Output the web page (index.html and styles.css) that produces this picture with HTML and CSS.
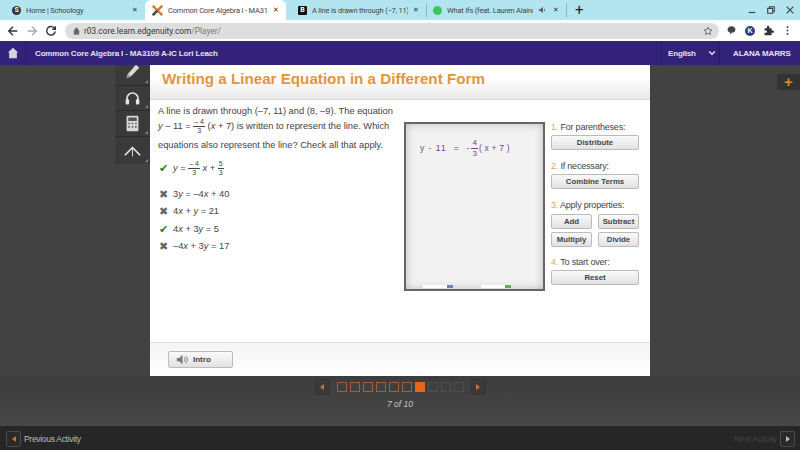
FILE: index.html
```html
<!DOCTYPE html>
<html lang="en">
<head>
  <meta charset="UTF-8" />
  <title>Common Core Algebra I - MA3109</title>
  <link rel="stylesheet" href="styles.css">
</head>
<body>
  <div class="tabs">
    <div class="tab"><span class="fav fav-s">S</span><span class="tab-name">Home | Schoology</span><span class="tab-x">✕</span></div>
    <div class="tab active">
      <svg class="fav-svg" viewBox="0 0 14 14"><path d="M1 1l12 12M13 1L1 13" stroke="#d9772b" stroke-width="3"/><path d="M1 13L7 7" stroke="#33506b" stroke-width="3"/></svg>
      <span class="tab-name">Common Core Algebra I - MA310</span><span class="tab-x">✕</span>
    </div>
    <div class="tab"><span class="fav fav-b">B</span><span class="tab-name">A line is drawn through (−7, 11)</span><span class="tab-x">✕</span></div>
    <div class="tab last"><span class="fav fav-g"></span><span class="tab-name">What Ifs (feat. Lauren Alaina</span>
      <svg class="speaker-small" viewBox="0 0 10 10"><path d="M1 4h2l3-3v8L3 6H1z" fill="#555"/><path d="M8 3.500v3" stroke="#555"/></svg>
      <span class="tab-x">✕</span></div>
    <div class="new-tab">+</div>
    <div class="win-btns">
      <svg viewBox="0 0 12 12"><path d="M2 9h8" stroke="#444" stroke-width="1.4"/></svg>
      <svg viewBox="0 0 12 12"><path d="M2 4h6v6H2zM4 4V2h6v6H8" fill="none" stroke="#444" stroke-width="1.3"/></svg>
      <svg viewBox="0 0 12 12"><path d="M2 2l8 8M10 2l-8 8" stroke="#444" stroke-width="1.4"/></svg>
    </div>
  </div>

  <div class="addr">
    <svg class="nav-ico" viewBox="0 0 14 14"><path d="M12 7H2.500M7 2L2 7l5 5" fill="none" stroke="#333" stroke-width="1.6"/></svg>
    <svg class="nav-ico" viewBox="0 0 14 14"><path d="M2 7h9.500M7 2l5 5-5 5" fill="none" stroke="#aaa" stroke-width="1.6"/></svg>
    <svg class="nav-ico" viewBox="0 0 14 14"><path d="M11.500 4.500A5 5 0 1 0 12 7.500M12 1.500v3.500H8.500" fill="none" stroke="#333" stroke-width="1.6"/></svg>
    <div class="url">
      <svg class="lock" viewBox="0 0 10 12"><path d="M1.500 5h7v6h-7zM3 5V3.500a2 2 0 0 1 4 0V5" fill="#666" stroke="#666"/></svg>
      <span class="url-host">r03.core.learn.edgenuity.com</span><span class="url-path">/Player/</span>
      <svg class="star" viewBox="0 0 14 14"><path d="M7 1.500l1.700 3.600 3.800.5-2.800 2.600.7 3.800L7 10.100 3.600 12l.7-3.800L1.500 5.600l3.800-.5z" fill="none" stroke="#555" stroke-width="1.1"/></svg>
    </div>
    <div class="ext">
      <svg viewBox="0 0 14 14"><path d="M7 1.500c3 0 5 1.800 5 4.200S10 10 7 10l-1 2.500-1-3C3 9 2 7.500 2 5.700 2 3.300 4 1.500 7 1.500z" fill="#444"/></svg>
      <span class="ext-k">K</span>
      <svg viewBox="0 0 14 14"><path d="M2 4h3V2.500a1.500 1.500 0 0 1 3 0V4h3v3h1.500a1.500 1.500 0 0 1 0 3H11v3H2v-3h1.500a1.500 1.500 0 0 0 0-3H2z" fill="#333"/></svg>
      <svg viewBox="0 0 14 14"><circle cx="7" cy="2.500" r="1.200" fill="#444"/><circle cx="7" cy="7" r="1.200" fill="#444"/><circle cx="7" cy="11.500" r="1.200" fill="#444"/></svg>
    </div>
  </div>

  <header class="site-head">
    <div class="home-btn"><svg viewBox="0 0 14 14"><path d="M7 1L1 6.500h1.500V13h9V6.500H13z" fill="#d5d2e0"/></svg></div>
    <div class="course">Common Core Algebra I - MA3109 A-IC Lori Leach</div>
    <div class="lang">English <svg viewBox="0 0 10 10"><path d="M1.500 3l3.500 3.500L8.500 3" fill="none" stroke="#e3e0ee" stroke-width="1.800"/></svg></div>
    <div class="user">ALANA MARRS</div>
  </header>

  <main class="stage">
    <aside class="tools">
      <div class="tool tool-pencil"><svg viewBox="0 0 20 20"><path d="M3 18l1.500-5L14 2l4 3.500L8 16z" fill="#d8d8d8"/><path d="M3 18l1.500-5L8 16z" fill="#999"/></svg></div>
      <div class="tool"><svg viewBox="0 0 20 20"><path d="M3.500 13V10a6.500 6.500 0 0 1 13 0v3" fill="none" stroke="#e4e4e4" stroke-width="2"/><rect x="2" y="11" width="4" height="6" rx="1" fill="#e4e4e4"/><rect x="14" y="11" width="4" height="6" rx="1" fill="#e4e4e4"/></svg></div>
      <div class="tool"><svg viewBox="0 0 20 20"><rect x="3" y="1" width="14" height="18" rx="1.500" fill="#d8d8d8"/><rect x="5" y="3" width="10" height="4" fill="#555"/><path d="M5 9h2v2H5zM9 9h2v2H9zM13 9h2v2h-2zM5 13h2v2H5zM9 13h2v2H9zM13 13h2v2h-2z" fill="#666"/></svg></div>
      <div class="tool"><svg viewBox="0 0 20 20"><path d="M1 15.500L10 6.500l9 9" fill="none" stroke="#eee" stroke-width="1.800"/><path d="M10 7v10" stroke="#eee" stroke-width="1"/></svg></div>
    </aside>

    <section class="card">
      <h1 class="title-bar">Writing a Linear Equation in a Different Form</h1>
      <div class="content">
        <div class="question">
          <p class="prompt">A line is drawn through (–7, 11) and (8, –9). The equation
            <span class="line-eq"><i>y</i> – 11 = <span class="frac"><span>– 4</span><span>3</span></span> (<i>x</i> + 7) is written to represent the line. Which</span>
            equations also represent the line? Check all that apply.</p>
          <ul class="answers">
            <li class="first"><span class="mark ok">✔</span><span><i>y</i> = <span class="frac"><span>– 4</span><span>3</span></span> <i>x</i> + <span class="frac"><span>5</span><span>3</span></span></span></li>
            <li><span class="mark no">✖</span><span>3<i>y</i> = –4<i>x</i> + 40</span></li>
            <li><span class="mark no">✖</span><span>4<i>x</i> + <i>y</i> = 21</span></li>
            <li><span class="mark ok">✔</span><span>4<i>x</i> + 3<i>y</i> = 5</span></li>
            <li><span class="mark no">✖</span><span>–4<i>x</i> + 3<i>y</i> = 17</span></li>
          </ul>
        </div>

        <div class="board">
          <div class="board-eq">
            <span>y - 11</span><span class="eq-sign">=</span>
            <span class="board-neg">-</span><span class="frac board-frac"><span>4</span><span>3</span></span><span class="board-paren">( x + 7 )</span>
          </div>
          <div class="tray">
            <span class="marker blue"></span><span class="marker green"></span>
          </div>
        </div>

        <div class="steps">
          <div class="step"><div class="step-label"><b>1.</b> For parentheses:</div><button class="btn">Distribute</button></div>
          <div class="step"><div class="step-label"><b>2.</b> If necessary:</div><button class="btn">Combine Terms</button></div>
          <div class="step step-props"><div class="step-label"><b>3.</b> Apply properties:</div>
            <div class="btn-grid"><button class="btn">Add</button><button class="btn">Subtract</button><button class="btn">Multiply</button><button class="btn">Divide</button></div>
          </div>
          <div class="step"><div class="step-label"><b>4.</b> To start over:</div><button class="btn">Reset</button></div>
        </div>
      </div>
      <div class="card-foot">
        <button class="intro">
          <svg viewBox="0 0 16 14"><path d="M1 5h3l4-4v12L4 9H1z" fill="#777"/><path d="M10 4.500a3.500 3.500 0 0 1 0 5M12 2.500a6.500 6.500 0 0 1 0 9" fill="none" stroke="#777" stroke-width="1.200"/></svg>
          Intro
        </button>
      </div>
    </section>

    <div class="plus-tab">+</div>
  </main>

  <div class="pager-wrap">
    <div class="pager">
      <span class="arrow"><i class="tri left"></i></span>
      <div class="squares">
        <span class="sq"></span><span class="sq"></span><span class="sq"></span><span class="sq"></span><span class="sq"></span><span class="sq"></span>
        <span class="sq on"></span><span class="sq off"></span><span class="sq off"></span><span class="sq off"></span>
      </div>
      <span class="arrow"><i class="tri right"></i></span>
    </div>
    <div class="count">7 of 10</div>
  </div>

  <footer class="activity">
    <div class="prev"><span class="arrow dark"><i class="tri left"></i></span> Previous Activity</div>
    <div class="next">Next Activity <span class="arrow dark"><i class="tri right grey"></i></span></div>
  </footer>
</body>
</html>
```

FILE: styles.css
```css
html, body { margin:0; height:450px; overflow:hidden; }
body { width:800px; font-family:"Liberation Sans",sans-serif; background:#424242; display:flex; flex-direction:column; }

/* browser chrome */
.tabs { height:20px; background:#b3e5f0; display:flex; align-items:center; font-family:Roboto,sans-serif; font-size:7.500px; letter-spacing:-.2px; color:#444; flex:none; }
.tab { width:140px; height:20px; box-sizing:border-box; display:flex; align-items:center; padding:0 7px 0 12px; gap:5px; }
.tab:first-child { width:145px; }
.tab.active { background:#fff; border-radius:6px 6px 0 0; width:141px; padding-left:6px; }
.tab.last { width:140px; padding-left:6px; border-left:1px solid #8fb8c2; height:14px; }
.tab-name { flex:1; white-space:nowrap; overflow:hidden; }
.tab-x { font-size:7px; color:#333; }
.fav { width:9px; height:9px; border-radius:50%; flex:none; font-size:7px; line-height:9px; text-align:center; color:#fff; font-weight:bold; }
.fav-s { background:#333; }
.fav-b { background:#111; border-radius:1px; }
.fav-g { background:#3cc860; }
.fav-svg { width:11px; height:11px; flex:none; margin-left:1px; }
.speaker-small { width:8px; height:8px; flex:none; margin-right:2px; }
.new-tab { padding-left:8px; border-left:1px solid #8fb8c2; font-size:15px; line-height:14px; color:#222; }
.win-btns { margin-left:auto; display:flex; gap:9px; padding-right:5px; }
.win-btns svg { width:10px; height:10px; }

.addr { height:21px; background:#fff; display:flex; align-items:center; padding-left:7px; flex:none; }
.nav-ico { width:12px; height:12px; margin-right:7px; }
.url { width:654px; margin-left:1px; height:16px; background:#dedede; border-radius:8px; display:flex; align-items:center; font-family:Roboto,sans-serif; font-size:8.300px; box-sizing:border-box; padding:0 6px 0 8px; flex:none; }
.lock { width:7px; height:8px; margin-right:4px; }
.url-host { color:#333; }
.url-path { color:#777; }
.star { width:10px; height:10px; margin-left:auto; }
.ext { display:flex; align-items:center; gap:8px; margin-left:7px; }
.ext svg { width:11px; height:11px; }
.ext-k { width:10px; height:10px; border-radius:50%; background:#2b3e8c; color:#fff; font-size:7px; line-height:10px; text-align:center; font-weight:bold; }

/* site header */
.site-head { height:24px; background:#33227a; color:#e4e1ef; display:flex; align-items:center; font-size:8px; letter-spacing:-.15px; font-weight:bold; flex:none; }
.home-btn { width:25px; height:24px; display:flex; align-items:center; justify-content:center; border-right:1px solid #2a1b69; }
.home-btn svg { width:12px; height:12px; }
.course { margin-left:9px; flex:1; }
.lang { width:59px; height:24px; display:flex; align-items:center; gap:12px; border-left:1px solid #2a1b69; border-right:1px solid #2a1b69; padding-left:6px; box-sizing:border-box; }
.lang svg { width:8px; height:8px; }
.user { width:80px; padding-left:13px; box-sizing:border-box; }

/* main stage */
.stage { height:311px; background:#424242; display:flex; flex:none; position:relative; }
.tools { width:35px; margin-left:115px; background:#3a3a3a; display:flex; flex-direction:column; align-self:flex-start; flex:none; }
.tool { height:26px; display:flex; align-items:center; justify-content:center; border-bottom:1px solid #2a2a2a; box-sizing:border-box; position:relative; }
.tool::after { content:""; position:absolute; right:2px; bottom:2px; border-left:3px solid transparent; border-bottom:3px solid #888; }
.tool svg { width:17px; height:17px; }
.tool-pencil { height:21px; align-items:flex-end; overflow:hidden; padding-bottom:5px; }
.tool:nth-child(2) { height:25px; }
.tool:nth-child(4) { height:27px; border-bottom:none; }

.card { width:500px; height:311px; background:#fff; display:flex; flex-direction:column; flex:none; }
.title-bar { margin:0; height:35px; background:linear-gradient(#fff 40%,#e8e8e8); border-bottom:1px solid #d8d8d8; color:#e2953e; font-size:15.200px; line-height:27px; padding-left:12px; box-sizing:border-box; flex:none; }
.content { display:flex; height:243px; flex:none; border-bottom:1px solid #ddd; box-sizing:border-box; }
.question { width:254px; padding:4px 0 0 8px; font-size:9.300px; color:#444; box-sizing:border-box; flex:none; }
.prompt { margin:0; line-height:14px; width:246px; }
.line-eq { white-space:nowrap; display:block; height:20px; line-height:14px; }
.frac { display:inline-flex; flex-direction:column; align-items:center; vertical-align:middle; font-size:7px; line-height:8px; }
.frac span:first-child { border-bottom:1px solid #444; padding:0 1px; }
.answers { list-style:none; margin:3px 0 0; padding:0 0 0 1px; }
.answers li { height:17.500px; display:flex; align-items:center; gap:4px; }
.answers li.first { height:26px; margin-bottom:4px; }
.mark { width:10px; font-size:10.500px; flex:none; }
.ok { color:#2f7d2f; }
.no { color:#666; }

.board { width:141px; height:169px; margin-top:22px; box-sizing:border-box; border:2px solid #666; background:#f2f2f2; box-shadow:inset 0 0 8px #bbb; display:flex; flex-direction:column; flex:none; }
.board-eq { display:flex; align-items:center; color:#7a3d9a; font-size:8.500px; letter-spacing:1px; margin:14px 0 0 14px; white-space:nowrap; height:20px; }
.eq-sign { margin:0 7px 0 7px; }
.board-neg { margin-right:1px; }
.board-frac { color:#7a3d9a; margin-right:1px; font-size:8px; line-height:10px; letter-spacing:0; }
.board-frac span:first-child { border-color:#7a3d9a; }
.board-paren { letter-spacing:.2px; }
.tray { margin-top:auto; height:4px; display:flex; gap:28px; padding-left:17px; }
.marker { width:30px; height:3px; background:linear-gradient(90deg,#fff 80%,#6a7fc0 80%); }
.marker.green { background:linear-gradient(90deg,#fff 80%,#6ca85a 80%); }

.steps { width:88px; margin-left:6px; padding-top:21px; font-size:9px; letter-spacing:-.2px; color:#444; flex:none; }
.step { margin-bottom:10px; }
.step-props { margin-bottom:9px; }
.step-label { line-height:12px; margin-bottom:2px; }
.step-label b { font-weight:normal; color:#e2a858; }
.btn { width:88px; height:15px; padding:0; background:linear-gradient(#fafafa,#e2e2e2); border:1px solid #bbb; border-radius:2px; font-family:inherit; font-size:7.800px; font-weight:bold; color:#444; display:block; }
.btn-grid { display:grid; grid-template-columns:41px 41px; column-gap:6px; row-gap:3px; margin-top:3px; }
.btn-grid .btn { width:41px; }

.card-foot { flex:1; background:linear-gradient(#f4f4f4,#fff); padding:8px 0 0 18px; box-sizing:border-box; }
.intro { width:65px; height:17px; padding:0 0 0 7px; background:linear-gradient(#fafafa,#e2e2e2); border:1px solid #bbb; border-radius:2px; font-family:inherit; font-size:8px; font-weight:bold; color:#444; display:flex; align-items:center; gap:4px; }
.intro svg { width:13px; height:13px; }

.plus-tab { position:absolute; right:0; top:9px; width:23px; height:16px; background:#333; border-radius:3px 0 0 3px; color:#e8862a; font-size:15px; font-weight:bold; line-height:15px; text-align:center; box-sizing:border-box; }

/* pager */
.pager-wrap { height:50px; flex:none; background:linear-gradient(#3d3d3d,#484848); }
.pager { display:flex; justify-content:center; align-items:center; gap:7px; padding-top:3px; }
.arrow { width:13px; height:14px; border:1px solid #333; border-radius:2px; background:#3a3a3a; display:flex; align-items:center; justify-content:center; flex:none; }
.tri { width:0; height:0; border-top:3px solid transparent; border-bottom:3px solid transparent; }
.tri.left { border-right:4px solid #c96f3a; }
.tri.right { border-left:4px solid #c96f3a; }
.tri.right.grey { border-left-color:#bbb; }
.squares { display:flex; gap:3px; }
.sq { width:8px; height:8px; border:1px solid #a0603a; }
.sq.on { background:#e8641a; border-color:#e8641a; }
.sq.off { border-color:#4f4f4f; }
.count { text-align:center; font-size:8.500px; font-style:italic; color:#c4c4c4; margin-top:4px; }

.activity { flex:1; background:#262626; display:flex; justify-content:space-between; align-items:center; padding:2px 5px 0 6px; font-size:8.500px; letter-spacing:-.3px; color:#bbb; }
.prev, .next { display:flex; align-items:center; gap:3px; }
.next { color:#444; }
.arrow.dark { background:#2a2a2a; border-color:#4a4a4a; }
```
